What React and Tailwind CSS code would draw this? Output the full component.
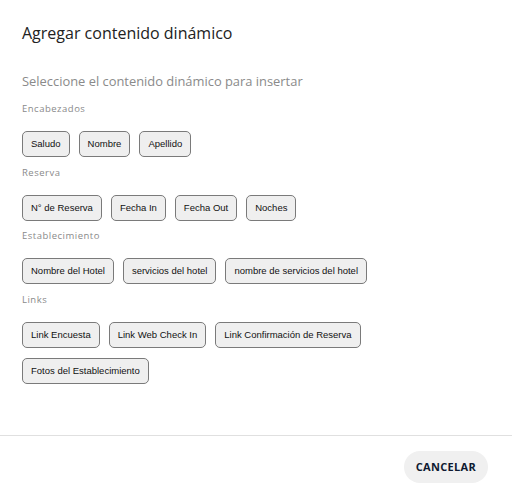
const GROUPS = [
    { label: 'Encabezados', items: ['Saludo', 'Nombre', 'Apellido'] },
    { label: 'Reserva', items: ['N° de Reserva', 'Fecha In', 'Fecha Out', 'Noches'] },
    { label: 'Establecimiento', items: ['Nombre del Hotel', 'servicios del hotel', 'nombre de servicios del hotel'] },
    { label: 'Links', items: ['Link Encuesta', 'Link Web Check In', 'Link Confirmación de Reserva', 'Fotos del Establecimiento'] },
]

function Chip({ children }) {
    return (
        <button className="h-[26px] px-[8px] rounded-[5px] border border-[#7a7a7a] bg-[#efefef] text-[9.5px] text-[#111] font-['Liberation_Sans',Arial,sans-serif] leading-none">
            {children}
        </button>
    )
}

export default function App() {
    return (
        <div className="w-[512px] h-[502px] bg-white flex flex-col font-['Open_Sans',sans-serif]">
            <div className="flex-1 px-[22px]">
                <h2 className="pt-[21px] text-[16px] leading-[24px] text-[#222]">Agregar contenido dinámico</h2>
                <p className="mt-[27px] text-[12.9px] leading-[18px] text-[#8a8a8a]">Seleccione el contenido dinámico para insertar</p>

                <div className="mt-[12px]">
                    {GROUPS.map(g => (
                        <div key={g.label}>
                            <div className="text-[9.5px] leading-[14px] text-[#8a8a8a] tracking-[0.5px] mt-[3px]">{g.label}</div>
                            <div className="flex flex-wrap gap-x-[9px] gap-y-[10px] mt-[15px] mb-[8.5px]">
                                {g.items.map(i => <Chip key={i}>{i}</Chip>)}
                            </div>
                        </div>
                    ))}
                </div>
            </div>

            <div className="border-t border-[#e0e0e0] h-[67px] flex items-start justify-end pt-[15px] pr-[24px]">
                <button className="h-[32px] px-[12px] rounded-full bg-[#f0f0f0] text-[11px] font-bold text-[#0f1a30] tracking-[0.3px]">
                    CANCELAR
                </button>
            </div>
        </div>
    )
}
